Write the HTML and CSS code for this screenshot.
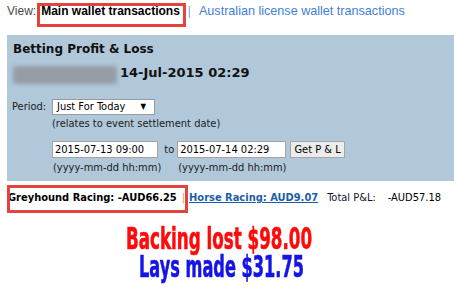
FILE: index.html
```html
<!DOCTYPE html>
<html>
<head>
<meta charset="utf-8">
<link rel="stylesheet" href="styles.css">
</head>
<body>
<div class="page">
  <div class="viewbar">
    <span class="lbl">View:</span>
    <span class="current">Main wallet transactions</span>
    <span class="vsep">|</span>
    <a class="other" href="#">Australian license wallet transactions</a>
    <span class="hl hl-top"></span>
  </div>

  <div class="panel">
    <div class="title">Betting Profit &amp; Loss</div>
    <div class="who">
      <span class="blur"></span>
      <span class="stamp">14-Jul-2015 02:29</span>
    </div>
    <div class="period">
      <span class="plabel">Period:</span>
      <div class="pfield">
        <span class="select">Just For Today<span class="arrow">▼</span></span>
        <span class="note">(relates to event settlement date)</span>
      </div>
    </div>
    <div class="range">
      <div class="dcol">
        <input class="date d1" type="text" value="2015-07-13 09:00">
        <span class="hint">(yyyy-mm-dd hh:mm)</span>
      </div>
      <span class="to">to</span>
      <div class="dcol">
        <input class="date d2" type="text" value="2015-07-14 02:29">
        <span class="hint">(yyyy-mm-dd hh:mm)</span>
      </div>
      <button class="go" type="button">Get P &amp; L</button>
    </div>
  </div>

  <div class="summary">
    <span class="grey">Greyhound Racing: -AUD66.25</span>
    <span class="ssep">|</span>
    <a class="horse" href="#">Horse Racing: AUD9.07</a>
    <span class="total">Total P&amp;L:</span>
    <span class="amt">-AUD57.18</span>
    <span class="hl hl-sum"></span>
  </div>

  <div class="notes">
    <div class="big red"><span>Backing lost $98.00</span></div>
    <div class="big blue"><span>Lays made $31.75</span></div>
  </div>
</div>
</body>
</html>
```

FILE: styles.css
```css
html, body {
  margin: 0;
  padding: 0;
  background: #ffffff;
}
body {
  width: 454px;
  height: 291px;
  overflow: hidden;
  font-family: "Liberation Sans", Arial, sans-serif;
}
.page {
  width: 454px;
}

/* top view bar */
.viewbar {
  position: relative;
  box-sizing: border-box;
  height: 35px;
  padding: 4px 0 0 7px;
  display: flex;
  align-items: baseline;
  white-space: nowrap;
  font-size: 12px;
  line-height: 14px;
}
.lbl {
  color: #4a4a4a;
}
.current {
  margin-left: 5px;
  font-weight: bold;
  color: #000;
}
.vsep {
  margin: 0 8px 0 8px;
  color: #8a9ac8;
}
.other {
  color: #3f80d8;
  text-decoration: none;
  font-size: 12.6px;
}
.hl {
  position: absolute;
  box-sizing: border-box;
  border: 3px solid #e4423f;
}
.hl-top {
  left: 37px;
  top: 3px;
  width: 149px;
  height: 24px;
}

/* panel */
.panel {
  margin-left: 7px;
  padding: 7px 0 7px 6px;
  background: #b0c8da;
  color: #1c1c1c;
  font-family: "DejaVu Sans Condensed", "DejaVu Sans", sans-serif;
  font-size: 11px;
  line-height: 13px;
}
.title {
  font-family: "DejaVu Sans", sans-serif;
  font-weight: bold;
  font-size: 12px;
  line-height: 14px;
  color: #111;
}
.who {
  margin-top: 9px;
  height: 20px;
  display: flex;
  align-items: flex-start;
}
.blur {
  display: block;
  width: 104px;
  height: 18px;
  margin-top: 1px;
  background: #949da6;
  filter: blur(2px);
  border-radius: 2px;
}
.stamp {
  margin-left: 3px;
  font-family: "DejaVu Sans", sans-serif;
  font-weight: bold;
  font-size: 13px;
  line-height: 15px;
  color: #111;
}
.period {
  margin-top: 14px;
  margin-left: -1px;
  display: flex;
  align-items: flex-start;
}
.plabel {
  width: 40px;
  line-height: 16px;
}
.pfield {
  display: flex;
  flex-direction: column;
  align-items: flex-start;
}
.select {
  box-sizing: border-box;
  width: 103px;
  height: 16px;
  padding: 0 0 0 4px;
  display: flex;
  justify-content: space-between;
  align-items: center;
  background: #fff;
  border: 1px solid #9a9a9a;
  line-height: 14px;
  color: #000;
}
.arrow {
  font-size: 8px;
  margin-right: 8px;
  color: #000;
}
.note {
  margin-top: 2px;
}
.range {
  margin-top: 11px;
  margin-left: 39px;
  display: flex;
  align-items: flex-start;
}
.dcol {
  display: flex;
  flex-direction: column;
  align-items: flex-start;
}
.date {
  box-sizing: border-box;
  height: 17px;
  margin: 0;
  padding: 0 2px;
  border: 1px solid #a3a3a3;
  background: #fff;
  color: #000;
  font-family: "DejaVu Sans Condensed", "DejaVu Sans", sans-serif;
  font-size: 11px;
  line-height: 15px;
  outline: none;
}
.d1 { width: 106px; }
.d2 { width: 109px; }
.hint {
  margin-top: 3px;
  margin-left: 1px;
}
.to {
  margin: 0 3px;
  line-height: 17px;
}
.go {
  box-sizing: border-box;
  height: 17px;
  margin: 0 0 0 4px;
  padding: 0 3px;
  border: 1px solid #a5a5a5;
  background: #ececec;
  color: #000;
  font-family: "DejaVu Sans Condensed", "DejaVu Sans", sans-serif;
  font-size: 11px;
  line-height: 15px;
}

/* summary */
.summary {
  position: relative;
  height: 24px;
  padding: 10px 0 0 8px;
  box-sizing: border-box;
  display: flex;
  align-items: baseline;
  white-space: nowrap;
  font-family: "DejaVu Sans Condensed", "DejaVu Sans", sans-serif;
  font-size: 11px;
  line-height: 14px;
  color: #111;
}
.grey {
  font-weight: bold;
  color: #000;
}
.ssep {
  margin: 0 4px 0 5px;
  color: #d0a040;
}
.horse {
  font-weight: bold;
  color: #1d5ea8;
  text-decoration: underline;
}
.total {
  margin-left: 9px;
  color: #141432;
}
.amt {
  margin-left: 12px;
  color: #000;
}
.hl-sum {
  left: 7px;
  top: 4px;
  width: 181px;
  height: 28px;
}

/* big notes */
.notes {
  margin-top: 20px;
  padding-right: 16px;
  text-align: center;
}
.big {
  font-family: "DejaVu Sans Condensed", "DejaVu Sans", sans-serif;
  font-weight: bold;
  font-size: 30px;
  line-height: 28px;
  white-space: nowrap;
}
.big span {
  display: inline-block;
  transform: scaleX(0.62);
  -webkit-text-stroke: 0.6px currentColor;
}
.blue span {
  transform: scaleX(0.6);
  margin-left: 6px;
}
.red { color: #ff0a0a; }
.blue { color: #1414e6; }
```
